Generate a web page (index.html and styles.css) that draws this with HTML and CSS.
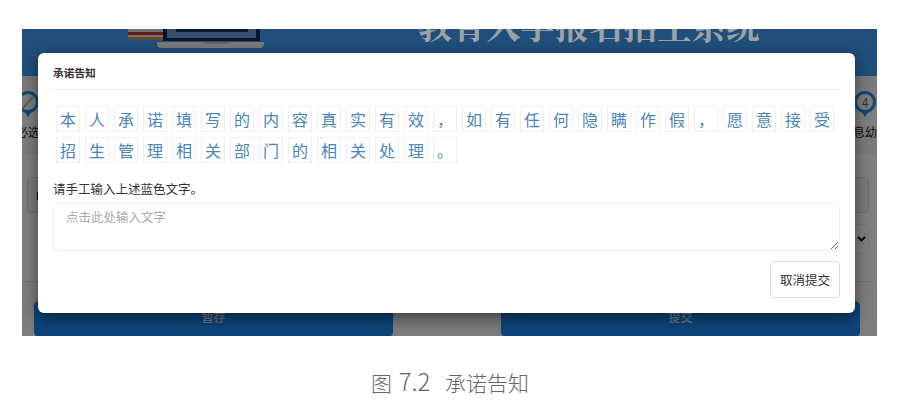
FILE: index.html
```html
<!DOCTYPE html>
<html lang="zh-CN">
<head>
<meta charset="utf-8">
<title>承诺告知</title>
<link rel="stylesheet" href="styles.css">
</head>
<body>
<figure class="figure">
  <div class="shot">
    <div class="page">
      <header class="banner">
        <svg class="logo" width="136" height="19" viewBox="0 0 136 19">
          <rect x="0" y="0" width="36" height="3" fill="#e8e4dc"/>
          <rect x="0" y="3" width="36" height="3" fill="#c9402c"/>
          <rect x="0" y="6" width="36" height="2" fill="#e8e4dc"/>
          <rect x="0" y="8" width="36" height="3" fill="#c99a6c"/>
          <path d="M35 0h97v12H35z" fill="#0d2a58"/>
          <path d="M39 0h89v9H39z" fill="#6f9fd6"/>
          <path d="M48 0h72v3H48z" fill="#12305e"/>
          <path d="M29 13h107v2q0 4-5 4H34q-5 0-5-4z" fill="#f2f2f2"/>
          <path d="M75 13h26v1q-2 1-4 1H79q-2 0-4-2z" fill="#c8c8c8"/>
        </svg>
        <h1 class="banner-title">教育入学报名招生系统</h1>
      </header>
      <nav class="steps">
        <div class="step step-first">
          <svg class="pin" width="24" height="28" viewBox="0 0 24 28">
            <circle cx="12" cy="11" r="9.5" fill="none" stroke="#2a8fe6" stroke-width="3"/>
            <path d="M7 17 17 6" stroke="#bdbdbd" stroke-width="2.4"/>
            <path d="M21 11h3" stroke="#2a8fe6" stroke-width="2.4"/>
            <path d="M8 20h8l-4 6z" fill="#2a8fe6"/>
          </svg>
          <span class="step-label">必选</span>
        </div>
        <div class="step step-last">
          <svg class="pin" width="24" height="28" viewBox="0 0 24 28">
            <circle cx="12" cy="11" r="9.5" fill="none" stroke="#2a8fe6" stroke-width="3"/>
            <text x="12" y="15.5" class="pin-num">4</text>
            <path d="M8 20h8l-4 6z" fill="#2a8fe6"/>
          </svg>
          <span class="step-label">息幼</span>
        </div>
      </nav>
      <section class="form">
        <div class="field field-left"><i class="mark"></i></div>
        <div class="field field-right"></div>
        <div></div>
        <div class="select">
          <svg width="9" height="6" viewBox="0 0 9 6"><path d="M1 1l3.500 3.500L8 1" fill="none" stroke="#000" stroke-width="1.800"/></svg>
        </div>
      </section>
      <footer class="actions">
        <button class="primary" type="button">暂存</button>
        <button class="primary" type="button">提交</button>
      </footer>
    </div>
    <div class="overlay"></div>
    <div class="modal">
      <h2 class="modal-title">承诺告知</h2>
      <div class="tiles">
        <span class="tile">本</span><span class="tile">人</span><span class="tile">承</span><span class="tile">诺</span><span class="tile">填</span><span class="tile">写</span><span class="tile">的</span><span class="tile">内</span><span class="tile">容</span><span class="tile">真</span><span class="tile">实</span><span class="tile">有</span><span class="tile">效</span><span class="tile">，</span><span class="tile">如</span><span class="tile">有</span><span class="tile">任</span><span class="tile">何</span><span class="tile">隐</span><span class="tile">瞒</span><span class="tile">作</span><span class="tile">假</span><span class="tile">，</span><span class="tile">愿</span><span class="tile">意</span><span class="tile">接</span><span class="tile">受</span><span class="tile">招</span><span class="tile">生</span><span class="tile">管</span><span class="tile">理</span><span class="tile">相</span><span class="tile">关</span><span class="tile">部</span><span class="tile">门</span><span class="tile">的</span><span class="tile">相</span><span class="tile">关</span><span class="tile">处</span><span class="tile">理</span><span class="tile">。</span>
      </div>
      <label class="prompt" for="pledge">请手工输入上述蓝色文字。</label>
      <textarea class="input" id="pledge" placeholder="点击此处输入文字"></textarea>
      <div class="modal-foot">
        <button class="cancel" type="button">取消提交</button>
      </div>
    </div>
  </div>
  <figcaption class="caption">图 <span class="caption-num">7.2</span> 承诺告知</figcaption>
</figure>
</body>
</html>
```

FILE: styles.css
```css
* {
  box-sizing: border-box;
}

html,
body {
  margin: 0;
  padding: 0;
  background: #fff;
}

body {
  font-family: "Noto Sans CJK SC", "Liberation Sans", sans-serif;
  overflow: hidden;
}

.figure {
  margin: 0;
  padding: 29px 0 0 22px;
}

.shot {
  position: relative;
  width: 855px;
  height: 307px;
  overflow: hidden;
}

.page {
  display: flex;
  flex-direction: column;
  height: 100%;
  background: #fff;
}

.banner {
  display: flex;
  flex: none;
  height: 47px;
  background: #3f9ef5;
}

.logo {
  flex: none;
  margin-left: 106px;
}

.banner-title {
  position: relative;
  z-index: 1;
  flex: none;
  margin: -21px 0 0 154px;
  font-family: "Liberation Serif", "Noto Serif CJK SC", "Noto Sans CJK SC", serif;
  font-size: 34px;
  line-height: 40px;
  font-weight: 700;
  letter-spacing: 0.2px;
  color: #9ea2a6;
  white-space: nowrap;
}

.steps {
  display: flex;
  flex: none;
  justify-content: space-between;
  height: 78px;
  padding-top: 15px;
  background: linear-gradient(#f2f2f2, #fff 60%, #f4f4f4);
  border-bottom: 1px solid #eee;
}

.step {
  display: flex;
  flex-direction: column;
  align-items: center;
  width: 56px;
  font-size: 12px;
  line-height: 16px;
  color: #222;
}

.step-first {
  margin-left: -22px;
}

.step-last {
  margin-right: -16px;
}

.pin {
  display: block;
}

.pin-num {
  font-family: "Liberation Sans", sans-serif;
  font-size: 12px;
  text-anchor: middle;
  fill: #4a6f96;
}

.step-label {
  margin-top: 5px;
  white-space: nowrap;
}

.form {
  display: grid;
  flex: none;
  grid-template-columns: 1fr 1fr;
  grid-template-rows: 36px 30px;
  gap: 11px 30px;
  height: 127px;
  padding: 23px 8px 0 5px;
}

.field {
  position: relative;
  border: 1px solid #ddd;
  border-radius: 4px;
  background: #f0f4f8;
}

.mark {
  position: absolute;
  top: 14px;
  left: 9px;
  width: 2px;
  height: 8px;
  background: #000;
}

.select {
  display: flex;
  align-items: center;
  justify-content: flex-end;
  padding-right: 2px;
  border: 1px solid #eee;
  border-radius: 4px;
}

.actions {
  display: flex;
  flex: 1;
  justify-content: space-between;
  padding: 19px 17px 0 12px;
  border-top: 1px solid #e4e4e4;
  background: #fbfbfb;
}

.primary {
  width: 359px;
  height: 36px;
  padding: 0 0 4px;
  border: 0;
  border-radius: 5px;
  background: #1a8af5;
  color: #fff;
  font: 12px/32px "Noto Sans CJK SC", sans-serif;
}

.overlay {
  position: absolute;
  inset: 0;
  background: rgba(0, 0, 0, 0.5);
}

.modal {
  position: absolute;
  z-index: 2;
  top: 24px;
  left: 16px;
  display: flex;
  flex-direction: column;
  width: 817px;
  height: 260px;
  padding: 0 15px;
  border-radius: 6px;
  background: #fff;
  box-shadow: 0 5px 15px rgba(0, 0, 0, 0.5);
}

.modal-title {
  flex: none;
  height: 37px;
  margin: 0;
  border-bottom: 1px solid #e9e9e9;
  font-size: 10.7px;
  line-height: 39px;
  font-weight: 700;
  color: #333;
}

.tiles {
  display: flex;
  flex: none;
  flex-wrap: wrap;
  gap: 5px;
  margin-top: 16px;
  padding-left: 3px;
}

.tile {
  flex: none;
  width: 24px;
  height: 26px;
  border: 1px solid #efefef;
  font-size: 16px;
  line-height: 24px;
  text-align: center;
  color: #4a85bd;
}

.prompt {
  flex: none;
  margin-top: 17px;
  font-size: 12.5px;
  line-height: 18px;
  color: #333;
}

.input {
  display: block;
  flex: none;
  width: 787px;
  height: 48px;
  margin-top: 5px;
  padding: 4px 12px;
  border: 1px solid #eee;
  border-radius: 4px;
  outline: 0;
  font: 12.5px/18px "Noto Sans CJK SC", sans-serif;
  color: #333;
}

.input::placeholder {
  color: #aaa;
  opacity: 1;
}

.modal-foot {
  display: flex;
  flex: none;
  justify-content: flex-end;
  margin-top: 10px;
}

.cancel {
  width: 70px;
  height: 37px;
  padding: 0;
  border: 1px solid #ddd;
  border-radius: 4px;
  background: #fff;
  color: #333;
  font: 12.5px/35px "Noto Sans CJK SC", sans-serif;
}

.caption {
  margin: 31px 0 0 -22px;
  font-size: 21px;
  line-height: 28px;
  font-weight: 300;
  text-align: center;
  color: #666;
}

.caption-num {
  margin: 0 10px 0 2px;
  font-size: 24px;
}
```
